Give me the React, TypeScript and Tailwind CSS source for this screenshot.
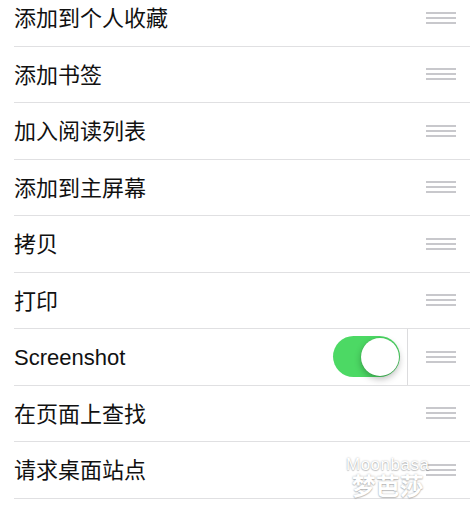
const items = [
  "添加到个人收藏",
  "添加书签",
  "加入阅读列表",
  "添加到主屏幕",
  "拷贝",
  "打印",
  "Screenshot",
  "在页面上查找",
  "请求桌面站点",
];

function Handle() {
  return (
    <div className="flex flex-col gap-[3px] w-[30px]">
      <span className="h-[2px] bg-[#c8c8cc]" />
      <span className="h-[2px] bg-[#c8c8cc]" />
      <span className="h-[2px] bg-[#c8c8cc]" />
    </div>
  );
}

function Toggle() {
  return (
    <div className="w-[67px] h-[41px] rounded-full bg-[#4cd964] flex items-center justify-end p-[1.5px]">
      <span className="w-[38px] h-[38px] rounded-full bg-white shadow-[0_3px_7px_rgba(0,0,0,0.28),0_0_0_0.5px_rgba(0,0,0,0.08)]" />
    </div>
  );
}

function Row({ label }: { label: string }) {
  const isToggle = label === "Screenshot";
  return (
    <div className="pl-[14px] h-[56.5px]">
      <div className="h-full flex items-center border-b border-[#e0e0e2] pr-[14px]">
        <span className="flex-1 pt-[3px] text-[22px] text-[#111] leading-none">{label}</span>
        {isToggle && (
          <>
            <Toggle />
            <span className="self-stretch w-px bg-[#dcdcde] ml-[7px] mr-[18px]" />
          </>
        )}
        <Handle />
      </div>
    </div>
  );
}

export default function App() {
  return (
    <div
      className="relative w-[470px] h-[521px] bg-white overflow-hidden"
      style={{ fontFamily: '"Liberation Sans", "Noto Sans CJK SC", sans-serif' }}
    >
      <div className="-mt-[10px]">
        {items.map((t) => (
          <Row key={t} label={t} />
        ))}
      </div>
      <div className="absolute left-[346px] top-[456px] flex flex-col items-center text-white leading-none [text-shadow:0_0_2px_rgba(0,0,0,0.3),0_1px_1px_rgba(0,0,0,0.2)] opacity-95">
        <span className="text-[17px] tracking-[0.5px]">Moonbasa</span>
        <span className="text-[24px] mt-[2px] font-bold">梦芭莎</span>
      </div>
    </div>
  );
}
